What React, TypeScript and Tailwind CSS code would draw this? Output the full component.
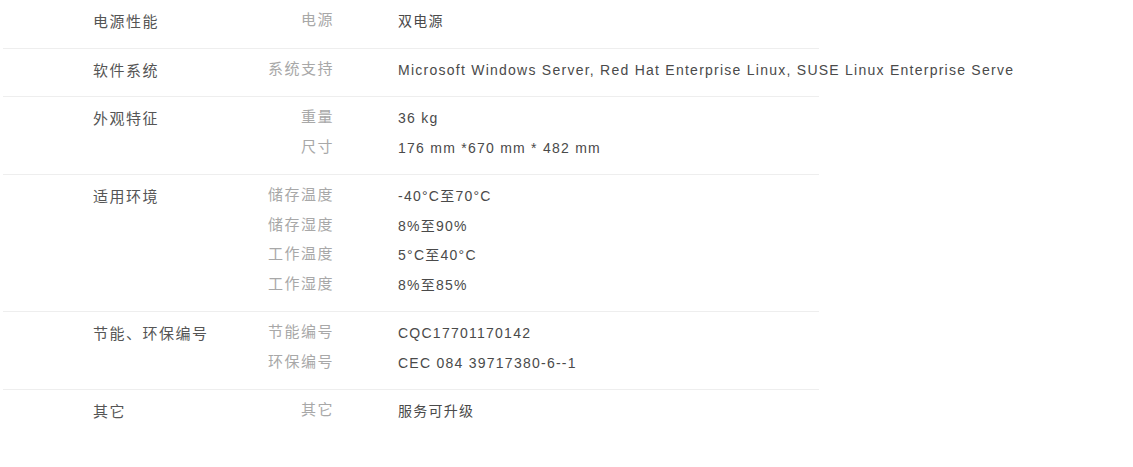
import React from "react";

type Spec = { name: string; value: string };
type Group = { title: string; specs: Spec[] };

const groups: Group[] = [
  { title: "电源性能", specs: [{ name: "电源", value: "双电源" }] },
  {
    title: "软件系统",
    specs: [
      {
        name: "系统支持",
        value:
          "Microsoft Windows Server, Red Hat Enterprise Linux, SUSE Linux Enterprise Serve",
      },
    ],
  },
  {
    title: "外观特征",
    specs: [
      { name: "重量", value: "36 kg" },
      { name: "尺寸", value: "176 mm *670 mm * 482 mm" },
    ],
  },
  {
    title: "适用环境",
    specs: [
      { name: "储存温度", value: "-40°C至70°C" },
      { name: "储存湿度", value: "8%至90%" },
      { name: "工作温度", value: "5°C至40°C" },
      { name: "工作湿度", value: "8%至85%" },
    ],
  },
  {
    title: "节能、环保编号",
    specs: [
      { name: "节能编号", value: "CQC17701170142" },
      { name: "环保编号", value: "CEC 084 39717380-6--1" },
    ],
  },
  { title: "其它", specs: [{ name: "其它", value: "服务可升级" }] },
];

export default function App() {
  return (
    <div className="w-full h-[467px] bg-white overflow-hidden font-['Liberation_Sans','Noto_Sans_CJK_SC',sans-serif] text-[14px] tracking-[1.25px]">
      <div className="ml-[3px] w-[816px]">
        {groups.map((g, i) => (
          <div
            key={i}
            className={`flex pt-[7px] pb-[11px] leading-[29.5px] ${
              i < groups.length - 1 ? "border-b border-[#eeeeee]" : ""
            }`}
          >
            <div className="w-[229px] shrink-0 pl-[90px] text-[15px] tracking-[1.5px] text-[#555555]">
              {g.title}
            </div>
            <div className="w-[102px] shrink-0 flex flex-col text-right text-[15px] tracking-[1.5px] text-[#a8a8a8] -mt-[2px]">
              {g.specs.map((s, j) => (
                <span key={j}>{s.name}</span>
              ))}
            </div>
            <div className="ml-[64px] flex flex-col whitespace-nowrap text-[#4a4a4a]">
              {g.specs.map((s, j) => (
                <span key={j}>{s.value}</span>
              ))}
            </div>
          </div>
        ))}
      </div>
    </div>
  );
}
